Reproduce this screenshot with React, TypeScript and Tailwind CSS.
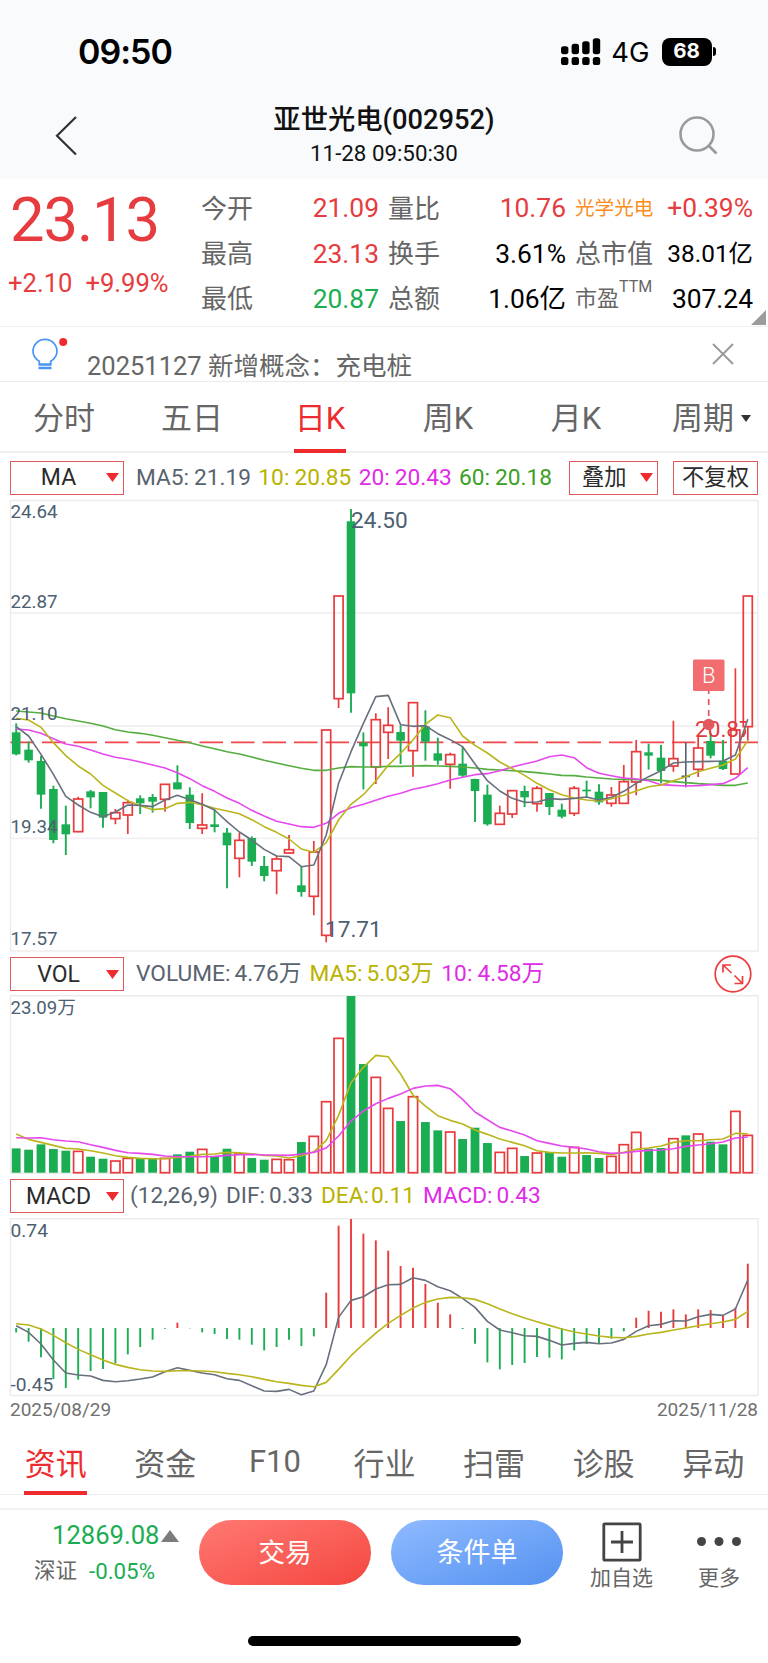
import type { ReactNode } from "react";

type Tone = "up" | "down" | "flat";
type Candle = [Tone, number, number, number, number];

const UP = "#e93a3c";
const DOWN = "#1aad52";
const SLATE = "#67707c";
const YELLOW = "#bab51c";
const MAGENTA = "#e548ee";
const GREEN = "#55ad3f";

const STEP = 12.4;
const cx = (i: number) => 6.2 + i * STEP;

// high, body top, body bottom, low - in thirds of a pixel on the price scale
const candles: Candle[] = [
  ["down", 700, 727, 793, 796], ["down", 755, 779, 811, 818], ["down", 797, 813, 914, 956],
  ["down", 887, 897, 1050, 1060], ["down", 947, 1003, 1033, 1095], ["up", 920, 927, 1025, 1027],
  ["down", 900, 904, 922, 955], ["down", 906, 906, 983, 1013], ["up", 957, 968, 986, 1003],
  ["up", 929, 938, 975, 1032], ["down", 916, 925, 940, 972], ["down", 912, 921, 935, 968],
  ["up", 883, 883, 928, 965], ["down", 826, 877, 898, 898], ["down", 892, 914, 999, 1017],
  ["up", 910, 1005, 1015, 1032], ["down", 958, 1003, 1011, 1027], ["down", 1014, 1028, 1066, 1195],
  ["up", 1028, 1051, 1105, 1162], ["down", 1039, 1044, 1115, 1128], ["down", 1098, 1128, 1158, 1174],
  ["up", 1098, 1107, 1142, 1213], ["up", 1035, 1079, 1089, 1091], ["down", 1130, 1186, 1206, 1220],
  ["up", 1053, 1086, 1219, 1276], ["up", 720, 720, 1336, 1357], ["up", 318, 318, 626, 654],
  ["down", 57, 94, 610, 668], ["down", 727, 758, 769, 898], ["up", 670, 689, 831, 882],
  ["up", 652, 706, 727, 807], ["down", 706, 726, 752, 822], ["up", 638, 638, 782, 860],
  ["down", 661, 709, 755, 812], ["down", 743, 790, 812, 824], ["up", 788, 794, 823, 896],
  ["down", 770, 821, 857, 861], ["down", 866, 867, 903, 996], ["down", 884, 914, 1003, 1007],
  ["up", 947, 970, 1003, 1003], ["up", 902, 902, 972, 984], ["down", 887, 903, 922, 951],
  ["up", 888, 895, 941, 965], ["down", 909, 909, 951, 975], ["down", 941, 959, 980, 985],
  ["up", 888, 895, 970, 978], ["down", 872, 899, 904, 922], ["down", 883, 905, 937, 944],
  ["up", 891, 915, 940, 950], ["up", 825, 875, 940, 940], ["up", 750, 785, 876, 916],
  ["down", 761, 787, 797, 839], ["down", 765, 803, 843, 880], ["up", 692, 806, 828, 845],
  ["flat", 757, 859, 859, 892], ["up", 738, 774, 838, 861], ["down", 728, 753, 797, 805],
  ["down", 750, 812, 837, 840], ["up", 535, 720, 852, 852], ["up", 318, 318, 710, 752],
];

const ma5 = [710, 738, 793, 853, 919, 945, 967, 980, 966, 945, 946, 950, 930, 916, 929, 943, 960, 995, 1026, 1050, 1078, 1098, 1100, 1130, 1125, 1035, 880, 785, 700, 620, 616, 704, 709, 707, 731, 749, 770, 822, 872, 903, 925, 937, 936, 926, 928, 925, 921, 930, 922, 904, 880, 860, 842, 819, 816, 815, 814, 813, 795, 688];
const ma10 = [685, 690, 712, 758, 797, 828, 852, 886, 909, 932, 947, 959, 956, 940, 937, 944, 955, 963, 971, 989, 1010, 1027, 1047, 1077, 1087, 1058, 990, 943, 914, 873, 826, 790, 750, 703, 675, 683, 738, 766, 789, 816, 836, 856, 880, 899, 914, 924, 930, 933, 926, 916, 903, 890, 885, 872, 860, 845, 835, 825, 807, 752];
const ma20 = [717, 720, 730, 746, 762, 769, 780, 792, 802, 808, 816, 825, 834, 848, 866, 887, 904, 924, 940, 961, 978, 994, 1002, 1010, 1012, 1000, 970, 953, 943, 931, 919, 910, 898, 890, 881, 870, 862, 854, 851, 842, 831, 822, 813, 800, 795, 803, 833, 850, 857, 864, 867, 872, 884, 886, 888, 887, 884, 881, 865, 833];
const ma60 = [663, 666, 669, 678, 686, 693, 700, 708, 719, 726, 730, 736, 743, 751, 758, 768, 776, 785, 792, 801, 811, 819, 827, 835, 841, 841, 834, 830, 831, 831, 829, 829, 828, 827, 828, 829, 831, 834, 838, 840, 842, 845, 848, 852, 856, 857, 861, 864, 867, 868, 869, 869, 871, 875, 878, 881, 883, 886, 886, 879];

const volTop = [595, 599, 583, 597, 602, 604, 620, 626, 633, 625, 624, 626, 625, 613, 605, 598, 620, 596, 612, 624, 629, 628, 629, 576, 559, 455, 265, 138, 342, 382, 475, 513, 440, 516, 541, 546, 567, 533, 579, 607, 595, 618, 609, 606, 620, 592, 615, 624, 619, 584, 547, 596, 594, 566, 556, 552, 575, 583, 484, 556];
const volMa5 = [552, 568, 577, 586, 595, 597, 602, 609, 617, 622, 625, 626, 626, 622, 619, 613, 612, 607, 608, 611, 616, 618, 624, 617, 605, 572, 496, 398, 352, 316, 320, 372, 435, 468, 497, 511, 522, 540, 553, 567, 577, 587, 602, 607, 609, 609, 608, 610, 613, 607, 598, 594, 588, 577, 572, 572, 569, 567, 550, 551];
const volMa10 = [563, 564, 563, 569, 573, 575, 584, 592, 601, 608, 610, 613, 618, 620, 620, 620, 619, 616, 614, 613, 615, 615, 616, 612, 607, 594, 558, 513, 483, 461, 445, 432, 415, 408, 406, 416, 448, 486, 509, 532, 543, 555, 572, 580, 588, 592, 597, 605, 610, 608, 604, 601, 600, 596, 589, 585, 581, 576, 564, 561];

const macd = [397, 425, 472, 537, 564, 539, 513, 507, 490, 463, 441, 419, 386, 368, 385, 397, 402, 417, 419, 434, 451, 441, 419, 438, 409, 278, 77, 57, 101, 121, 152, 198, 203, 252, 308, 343, 387, 431, 487, 508, 495, 489, 471, 473, 478, 451, 432, 430, 416, 394, 353, 332, 335, 328, 343, 328, 330, 345, 323, 191];
const dif = [377, 397, 432, 480, 519, 525, 528, 541, 545, 542, 537, 531, 515, 503, 511, 519, 524, 536, 541, 557, 573, 574, 568, 584, 573, 494, 352, 301, 290, 267, 254, 253, 233, 241, 260, 272, 295, 322, 364, 390, 398, 407, 409, 421, 435, 430, 427, 431, 429, 418, 394, 377, 373, 362, 363, 350, 343, 346, 327, 240];
const dea = [371, 375, 387, 406, 428, 448, 464, 480, 493, 502, 509, 513, 514, 512, 512, 513, 515, 520, 524, 530, 538, 545, 550, 556, 560, 547, 508, 467, 432, 399, 370, 346, 324, 307, 297, 292, 293, 298, 311, 327, 341, 354, 365, 376, 387, 396, 402, 408, 412, 413, 409, 402, 397, 390, 384, 377, 371, 366, 358, 334];

function Line({ data, y, color }: { data: number[]; y: (v: number) => number; color: string }) {
  return (
    <polyline
      points={data.map((v, i) => `${cx(i).toFixed(1)},${y(v).toFixed(2)}`).join(" ")}
      fill="none"
      stroke={color}
      strokeWidth="1.6"
      strokeLinejoin="round"
    />
  );
}

function PriceChart() {
  const y = (v: number) => v / 3 - 10;
  return (
    <svg viewBox="0 0 750 453" className="block h-[453px] w-[750px] overflow-visible">
      <clipPath id="plot-label">
        <rect x="680" y="210" width="56" height="40" />
      </clipPath>
      {[113, 226, 338.3].map((g) => (
        <path key={g} d={`M0.5 ${g}H748`} stroke="#f1f1f3" strokeWidth="1.8" />
      ))}
      <rect x="0.5" y="0.5" width="747.5" height="450.5" fill="none" stroke="#ebebed" strokeWidth="1.4" />
      <path d={`M0.5 ${y(757)}H748`} stroke="#f0464b" strokeWidth="1.6" strokeDasharray="23.5 8" />
      {candles.map(([tone, hi, top, bot, lo], i) => {
        const x = cx(i);
        if (tone === "flat")
          return <path key={i} d={`M${x} ${y(hi)}V${y(lo)}M${x - 4.3} ${y(top)}h8.6`} stroke="#566072" strokeWidth="1.6" />;
        if (tone === "down")
          return (
            <g key={i}>
              <path d={`M${x} ${y(hi)}V${y(lo)}`} stroke={DOWN} strokeWidth="1.9" />
              <rect x={x - 4.3} y={y(top)} width="8.6" height={Math.max(1.6, y(bot) - y(top))} fill={DOWN} />
            </g>
          );
        return (
          <g key={i} stroke={UP} strokeWidth="1.7" fill="none">
            <path d={`M${x} ${y(hi)}V${y(top)}M${x} ${y(bot)}V${y(lo)}`} />
            <rect x={x - 4.5} y={y(top)} width="9" height={y(bot) - y(top)} />
          </g>
        );
      })}
      <Line data={ma60} y={y} color={GREEN} />
      <Line data={ma20} y={y} color={MAGENTA} />
      <Line data={ma10} y={y} color={YELLOW} />
      <Line data={ma5} y={y} color={SLATE} />
      <g fill="#4c6072" fontSize="18.8">
        <text x="0.5" y="18">24.64</text>
        <text x="0.5" y="108">22.87</text>
        <text x="0.5" y="220.4">21.10</text>
        <text x="0.5" y="332.6">19.34</text>
        <text x="0.5" y="444.8">17.57</text>
      </g>
      <g fill="#4c6072" fontSize="22.6">
        <text x="341" y="28">24.50</text>
        <text x="315" y="437">17.71</text>
      </g>
      <text x="685" y="237" fill="#e0393e" fontSize="22.6" clipPath="url(#plot-label)">20.87</text>
      <path d="M698.7 191v28" stroke="#e0565b" strokeWidth="1.7" strokeDasharray="6 5" strokeDashoffset="3" />
      <circle cx="698.7" cy="224.5" r="5.8" fill="#e05a60" />
      <rect x="683" y="159.5" width="31.5" height="31.5" rx="1.5" fill="#f26d70" />
      <text x="698.8" y="183" textAnchor="middle" fill="#fff" fontSize="22" fontWeight="300">B</text>
    </svg>
  );
}

function VolumeChart() {
  const y = (v: number) => (v - 137) / 3 + 0.7;
  const base = y(668);
  return (
    <svg viewBox="0 0 750 180" className="block h-[180px] w-[750px] overflow-visible">
      <rect x="0.5" y="0.7" width="747.5" height="177.5" fill="none" stroke="#ebebed" strokeWidth="1.4" />
      {volTop.map((v, i) => {
        const down = candles[i][0] !== "up";
        return down ? (
          <rect key={i} x={cx(i) - 4.4} y={y(v)} width="8.8" height={base - y(v)} fill={DOWN} />
        ) : (
          <rect key={i} x={cx(i) - 4.6} y={y(v)} width="9.2" height={base - y(v)} fill="none" stroke={UP} strokeWidth="1.7" />
        );
      })}
      <Line data={volMa5} y={y} color={YELLOW} />
      <Line data={volMa10} y={y} color={MAGENTA} />
      <text x="0.5" y="19.3" fill="#4c6072" fontSize="18.6">23.09万</text>
    </svg>
  );
}

function MacdChart() {
  const y = (v: number) => (v - 56) / 3 + 0.7;
  return (
    <svg viewBox="0 0 750 180" className="block h-[180px] w-[750px] overflow-visible">
      <rect x="0.5" y="0.7" width="747.5" height="176.8" fill="none" stroke="#ebebed" strokeWidth="1.4" />
      {macd.map((v, i) => (
        <path key={i} d={`M${cx(i)} ${y(384)}V${y(v)}`} stroke={v < 384 ? UP : DOWN} strokeWidth="1.9" />
      ))}
      <Line data={dif} y={y} color={SLATE} />
      <Line data={dea} y={y} color={YELLOW} />
      <g fill="#4c6072" fontSize="19.2">
        <text x="0.5" y="18.6">0.74</text>
        <text x="0.5" y="173.4">-0.45</text>
      </g>
    </svg>
  );
}

const Triangle = () => (
  <svg viewBox="0 0 13 9" className="h-[9px] w-[13px] shrink-0">
    <path d="M0 0h13L6.5 9z" fill="#ee2b2e" />
  </svg>
);

function Picker({ label }: { label: string }) {
  return (
    <div className="flex h-[34px] w-[114px] shrink-0 items-center border border-[#e2595c] pr-[4px] text-[23px] text-[#2b2b2b]">
      <span className="flex-1 text-center">{label}</span>
      <Triangle />
    </div>
  );
}

function Legend({ name, value, className }: { name: string; value: string; className: string }) {
  return (
    <span className={`flex shrink-0 ${className}`}>
      <span>{name}:</span>
      <span>{value}</span>
    </span>
  );
}

function Quote({ label, value, tone }: { label: ReactNode; value: string; tone: string }) {
  return (
    <div className="flex h-[45.4px] items-center justify-between whitespace-nowrap">
      {label}
      <span className={tone}>{value}</span>
    </div>
  );
}

const Label = ({ children }: { children: ReactNode }) => (
  <span className="text-[26px] text-[#666]">{children}</span>
);

const periods = ["分时", "五日", "日K", "周K", "月K"];
const sections = ["资讯", "资金", "F10", "行业", "扫雷", "诊股", "异动"];

export default function App() {
  return (
    <div className="flex h-[1663px] w-[768px] flex-col overflow-hidden bg-white font-['Roboto','Noto_Sans_CJK_SC',sans-serif] leading-none text-[#222]">
      <header className="flex h-[179px] flex-col bg-[#f8fafc]">
        <div className="flex h-[103px] items-center justify-between pr-[52px] pl-[78px] font-['Inter',sans-serif] text-black">
          <span className="text-[34px] font-semibold tracking-[-1px]">09:50</span>
          <div className="flex items-center">
            <svg viewBox="0 0 40 28" className="h-[28px] w-[40px]">
              {[8.2, 5.8, 3.2, 0.2].map((t, i) => (
                <g key={t}>
                  <rect x={i * 10.6} y={t} width="7.4" height={16.2 - t} rx="2.6" />
                  <rect x={i * 10.6} y="19" width="7.4" height="8" rx="2.6" />
                </g>
              ))}
            </svg>
            <span className="ml-[10px] pt-[2px] text-[27.4px]">4G</span>
            <div className="ml-[12px] flex h-[28px] w-[50px] items-center justify-center rounded-[8px] bg-black text-[20.5px] font-bold text-white">
              68
            </div>
            <div className="ml-[1px] h-[9px] w-[3.5px] rounded-r-full bg-black" />
          </div>
        </div>
        <div className="flex h-[76px] items-start justify-between pr-[50px] pl-[55px]">
          <svg viewBox="0 0 24 42" className="mt-[12px] mr-[11px] h-[42px] w-[24px] shrink-0" fill="none" stroke="#333" strokeWidth="2.2">
            <path d="M21 2L2 20.8L21 39.5" />
          </svg>
          <div className="flex flex-col items-center pt-[4px] text-[#111]">
            <span className="text-[27.3px] font-medium whitespace-nowrap">亚世光电(002952)</span>
            <span className="mt-[8px] text-[22.3px]">11-28 09:50:30</span>
          </div>
          <svg viewBox="0 0 40 40" className="mt-[13px] h-[40px] w-[40px] shrink-0" fill="none" stroke="#9a9a9a" strokeWidth="2.6">
            <circle cx="19" cy="18" r="16.5" />
            <path d="M30.5 29.5L38.5 37.5" />
          </svg>
        </div>
      </header>

      <section className="relative flex h-[148px] border-b border-[#f0f0f1] text-[26.4px]">
        <div className="w-[201px] text-[#e63c40]">
          <div className="pt-[11px] pl-[10px] text-[61.5px] tracking-[-1.1px]">23.13</div>
          <div className="flex gap-[13px] pt-[19px] pl-[8px] text-[25.6px]">
            <span>+2.10</span>
            <span>+9.99%</span>
          </div>
        </div>
        <div className="w-[178px] pt-[7px]">
          <Quote label={<Label>今开</Label>} value="21.09" tone="text-[#e63c40]" />
          <Quote label={<Label>最高</Label>} value="23.13" tone="text-[#e63c40]" />
          <Quote label={<Label>最低</Label>} value="20.87" tone="text-[#1aad52]" />
        </div>
        <div className="ml-[9px] w-[178px] pt-[7px] text-black">
          <Quote label={<Label>量比</Label>} value="10.76" tone="text-[#e63c40]" />
          <Quote label={<Label>换手</Label>} value="3.61%" tone="" />
          <Quote label={<Label>总额</Label>} value="1.06亿" tone="" />
        </div>
        <div className="ml-[9px] w-[178px] pt-[7px] text-black">
          <Quote label={<span className="text-[19.6px] text-[#fb8d1f]">光学光电</span>} value="+0.39%" tone="text-[#e63c40]" />
          <Quote label={<Label>总市值</Label>} value="38.01亿" tone="text-[24.4px]" />
          <Quote
            label={
              <span className="flex items-start text-[22px] text-[#666]">
                市盈<span className="-mt-[9px] text-[16px]">TTM</span>
              </span>
            }
            value="307.24"
            tone=""
          />
        </div>
        <svg viewBox="0 0 16 16" className="absolute right-[2px] bottom-[1px] h-[15px] w-[15px]">
          <path d="M16 0v16H0z" fill="#9b9b9b" />
        </svg>
      </section>

      <section className="flex h-[55px] items-start border-b border-[#ebebec] pr-[34px] pl-[31px]">
        <svg viewBox="0 0 38 34" className="mt-[10px] h-[34px] w-[38px]" fill="none" stroke="#4a94f5" strokeWidth="1.7">
          <path d="M8.3 27.5v-3.2C4.6 22 2 18.6 2 14.3a12 12 0 0 1 24 0c0 4.3-2.6 7.7-6.3 10v3.2" />
          <path d="M7.5 27.5h13M7.5 31h13" strokeWidth="2.4" />
          <circle cx="32.2" cy="5" r="4" fill="#ee2b2e" stroke="none" />
        </svg>
        <span className="ml-[18px] flex-1 pt-[27px] text-[25.5px] text-[#666]">20251127 新增概念：充电桩</span>
        <svg viewBox="0 0 22 22" className="mt-[16px] h-[22px] w-[22px]" stroke="#999" strokeWidth="1.9">
          <path d="M1 1l20 20M21 1L1 21" />
        </svg>
      </section>

      <nav className="grid h-[71px] grid-cols-6 border-b-2 border-[#f1f1f2] text-[31px] text-[#666]">
        {periods.map((p) => (
          <div key={p} className="relative flex items-center justify-center pt-[4px]">
            <span className={p === "日K" ? "text-[#ee2b2e]" : ""}>{p}</span>
            {p === "日K" && <div className="absolute -bottom-[2px] h-[4px] w-[52px] bg-[#ee2b2e]" />}
          </div>
        ))}
        <div className="flex items-center justify-center gap-[7px] pt-[4px] pl-[15px]">
          周期
          <svg viewBox="0 0 10 7" className="h-[7px] w-[10px]">
            <path d="M0 0h10L5 7z" fill="#333" />
          </svg>
        </div>
      </nav>

      <div className="flex h-[47px] items-center px-[10px] pt-[2px] text-[22.7px]">
        <Picker label="MA" />
        <div className="ml-[12px] flex flex-1 gap-[7.3px] pt-[2px]">
          <Legend name="MA5" value="21.19" className="gap-[5px] text-[#59636f]" />
          <Legend name="10" value="20.85" className="gap-[5px] text-[#b8b200]" />
          <Legend name="20" value="20.43" className="gap-[5px] text-[#e02be6]" />
          <Legend name="60" value="20.18" className="gap-[5px] text-[#3aa023]" />
        </div>
        <div className="flex h-[34px] w-[89px] shrink-0 items-center justify-between border border-[#e2595c] pr-[4px] pl-[12px] text-[22.3px] text-[#2b2b2b]">
          叠加
          <Triangle />
        </div>
        <div className="ml-[15px] flex h-[34px] w-[85px] shrink-0 items-center justify-center border border-[#e2595c] text-[22.3px] whitespace-nowrap text-[#2b2b2b]">
          不复权
        </div>
      </div>

      <div className="h-[453px] pl-[10px]">
        <PriceChart />
      </div>

      <div className="flex h-[42px] items-center px-[10px] text-[22.7px]">
        <Picker label="VOL" />
        <div className="ml-[12px] flex flex-1 gap-[8px]">
          <Legend name="VOLUME" value="4.76万" className="gap-[4px] text-[#59636f]" />
          <Legend name="MA5" value="5.03万" className="gap-[4px] text-[#b8b200]" />
          <Legend name="10" value="4.58万" className="gap-[5px] text-[#e02be6]" />
        </div>
        <svg viewBox="0 0 38 38" className="mr-[6px] h-[38px] w-[38px]" fill="none" stroke="#ee3c3f" strokeWidth="1.7">
          <circle cx="19" cy="19" r="17.8" />
          <path d="M9 17.5V10h8M9 10l8.5 8M20.5 20.5l8 8M20.5 28.5h8V21" />
        </svg>
      </div>

      <div className="h-[180px] pl-[10px]">
        <VolumeChart />
      </div>

      <div className="flex h-[43px] items-center px-[10px] pb-[1px] text-[22.6px]">
        <Picker label="MACD" />
        <span className="ml-[6px] text-[#59636f]">(12,26,9)</span>
        <div className="ml-[8px] flex flex-1 gap-[8px]">
          <Legend name="DIF" value="0.33" className="gap-[4px] text-[#59636f]" />
          <Legend name="DEA" value="0.11" className="gap-[2px] text-[#b8b200]" />
          <Legend name="MACD" value="0.43" className="gap-[4px] text-[#e02be6]" />
        </div>
      </div>

      <div className="h-[180px] pl-[10px]">
        <MacdChart />
      </div>

      <div className="flex h-[34px] justify-between px-[10px] pt-[2px] text-[19px] text-[#707070]">
        <span>2025/08/29</span>
        <span>2025/11/28</span>
      </div>

      <nav className="grid h-[63px] grid-cols-7 border-b border-[#efeff0] pl-[1px] text-[31px] text-[#666]">
        {sections.map((s) => (
          <div key={s} className="relative flex items-center justify-center pt-[3px]">
            <span className={s === "资讯" ? "text-[#ee2b2e]" : s === "F10" ? "pb-[7px]" : ""}>{s}</span>
            {s === "资讯" && <div className="absolute -bottom-[1px] h-[4px] w-[63px] bg-[#ee2b2e]" />}
          </div>
        ))}
      </nav>

      <footer className="mt-[13px] flex flex-1 flex-col border-t-2 border-[#f1f1f2]">
        <div className="flex h-[86px] items-start pt-[10px]">
          <div className="flex w-[199px] flex-col text-[#1aad52]">
            <div className="flex items-center gap-[2px] pt-[3px] pl-[52px] text-[25.6px]">
              12869.08
              <svg viewBox="0 0 18 12" className="h-[12px] w-[18px]">
                <path d="M9 0l9 12H0z" fill="#7c7c7c" />
              </svg>
            </div>
            <div className="flex items-center gap-[12px] pt-[11px] pl-[34px] text-[22.3px]">
              <span className="text-[21.5px] text-[#666]">深证</span>
              <span>-0.05%</span>
            </div>
          </div>
          <button className="h-[65px] w-[172px] rounded-full bg-linear-to-br from-[#ff7872] to-[#f4453f] pt-[2px] text-[26.5px] text-white">交易</button>
          <button className="ml-[20px] h-[65px] w-[172px] rounded-full bg-linear-to-br from-[#8fbaff] to-[#5592f0] pt-[2px] text-[27px] text-white">条件单</button>
          <div className="ml-[10px] flex w-[97px] flex-col items-center pt-[2px] text-[21px] text-[#666]">
            <svg viewBox="0 0 40 40" className="h-[40px] w-[40px]" fill="none" stroke="#444" strokeWidth="2.8">
              <rect x="1.8" y="1.8" width="36.4" height="36.4" rx="1" />
              <path d="M20 9v22M9 20h22" />
            </svg>
            <span className="mt-[6px]">加自选</span>
          </div>
          <div className="flex w-[98px] flex-col items-center pt-[2px] text-[21px] text-[#666]">
            <svg viewBox="0 0 46 40" className="h-[40px] w-[46px]" fill="#444">
              <circle cx="5.5" cy="19.5" r="4.5" />
              <circle cx="23" cy="19.5" r="4.5" />
              <circle cx="40.5" cy="19.5" r="4.5" />
            </svg>
            <span className="mt-[6px]">更多</span>
          </div>
        </div>
        <div className="mx-auto mt-[40px] h-[10px] w-[273px] rounded-full bg-black" />
      </footer>
    </div>
  );
}
